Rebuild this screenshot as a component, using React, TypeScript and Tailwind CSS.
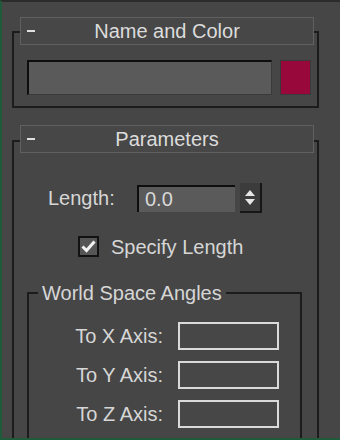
import React from "react"

const font = { fontFamily: '"Liberation Sans", Arial, sans-serif' }

function RolloutHeader({ title, top }: { title: string; top: string }) {
  return (
    <div className={`${top} ml-[6px] mr-[3px] h-[28px] border border-[#606060] bg-[#474747] flex items-center relative`}>
      <span className="absolute left-[6px] top-[12px] w-[8px] h-[2px] bg-[#e0e0e0]" />
      <span className="flex-1 text-center text-[20px] leading-none text-[#dcdcdc]">{title}</span>
    </div>
  )
}

function AxisRow({ label }: { label: string }) {
  return (
    <div className="flex items-center gap-[15px]">
      <span className="w-[134px] text-right text-[20px] leading-none text-[#d6d6d6]">{label}</span>
      <div className="w-[101px] h-[28px] border-2 border-[#dadada] bg-[#474747]" />
    </div>
  )
}

export default function App() {
  return (
    <div
      style={font}
      className="w-[340px] h-[440px] overflow-hidden bg-[#464646] border-l-2 border-b-2 border-[#1f5b3b] border-t-2 border-t-[#2c2c2c] pl-[10px]"
    >
      {/* Name and Color */}
      <div className="mt-[29px] w-[307px] border-2 border-[#1c1c1c] pb-[11px]">
        <RolloutHeader title="Name and Color" top="-mt-[16px]" />
        <div className="mt-[15px] pl-[13px] flex gap-[8px]">
          <div className="w-[245px] h-[35px] bg-[#5a5a5a] border-t-2 border-l-2 border-[#0e0e0e] border-b border-r border-b-[#3a3a3a] border-r-[#3a3a3a]" />
          <div className="w-[31px] h-[35px] bg-[#98083a] border border-[#3a3a3a]" />
        </div>
      </div>

      {/* Parameters */}
      <div className="mt-[32px] w-[307px] h-[400px] border-2 border-b-0 border-[#1c1c1c]">
        <RolloutHeader title="Parameters" top="-mt-[17px]" />

        <div className="mt-[30px] pl-[34px] flex items-center">
          <span className="w-[70px] text-[20px] leading-none text-[#d6d6d6]">Length:</span>
          <div className="ml-[19px] w-[98px] h-[27px] bg-[#5a5a5a] border-t-2 border-l-2 border-[#0e0e0e] flex items-center pl-[6px] text-[20px] leading-none text-[#d8d8d8]">
            0.0
          </div>
          <div className="ml-[5px] w-[22px] h-[30px] bg-[#3c3c3c] border-r-2 border-b-2 border-[#161616] flex flex-col items-center justify-center gap-[3px]">
            <svg width="10" height="6" viewBox="0 0 10 6"><path d="M5 0 L10 6 L0 6 Z" fill="#e6e6e6" /></svg>
            <svg width="10" height="6" viewBox="0 0 10 6"><path d="M0 0 L10 0 L5 6 Z" fill="#e6e6e6" /></svg>
          </div>
        </div>

        <div className="mt-[23px] pl-[64px] flex items-center gap-[12px]">
          <div className="w-[21px] h-[21px] bg-[#555555] border-2 border-[#121212] flex items-center justify-center">
            <svg width="15" height="13" viewBox="0 0 15 13">
              <path d="M1.5 6.5 L5.5 10.5 L13.5 1.5" stroke="#f2f2f2" strokeWidth="3" fill="none" />
            </svg>
          </div>
          <span className="text-[20px] leading-none text-[#d6d6d6]">Specify Length</span>
        </div>

        <fieldset className="mt-[24px] ml-[13px] w-[275px] h-[200px] border-2 border-[#1c1c1c]">
          <legend className="ml-[9px] px-[4px] text-[20px] leading-[24px] text-[#d6d6d6]">World Space Angles</legend>
          <div className="mt-[17px] flex flex-col gap-[11px]">
            <AxisRow label="To X Axis:" />
            <AxisRow label="To Y Axis:" />
            <AxisRow label="To Z Axis:" />
          </div>
        </fieldset>
      </div>
    </div>
  )
}
